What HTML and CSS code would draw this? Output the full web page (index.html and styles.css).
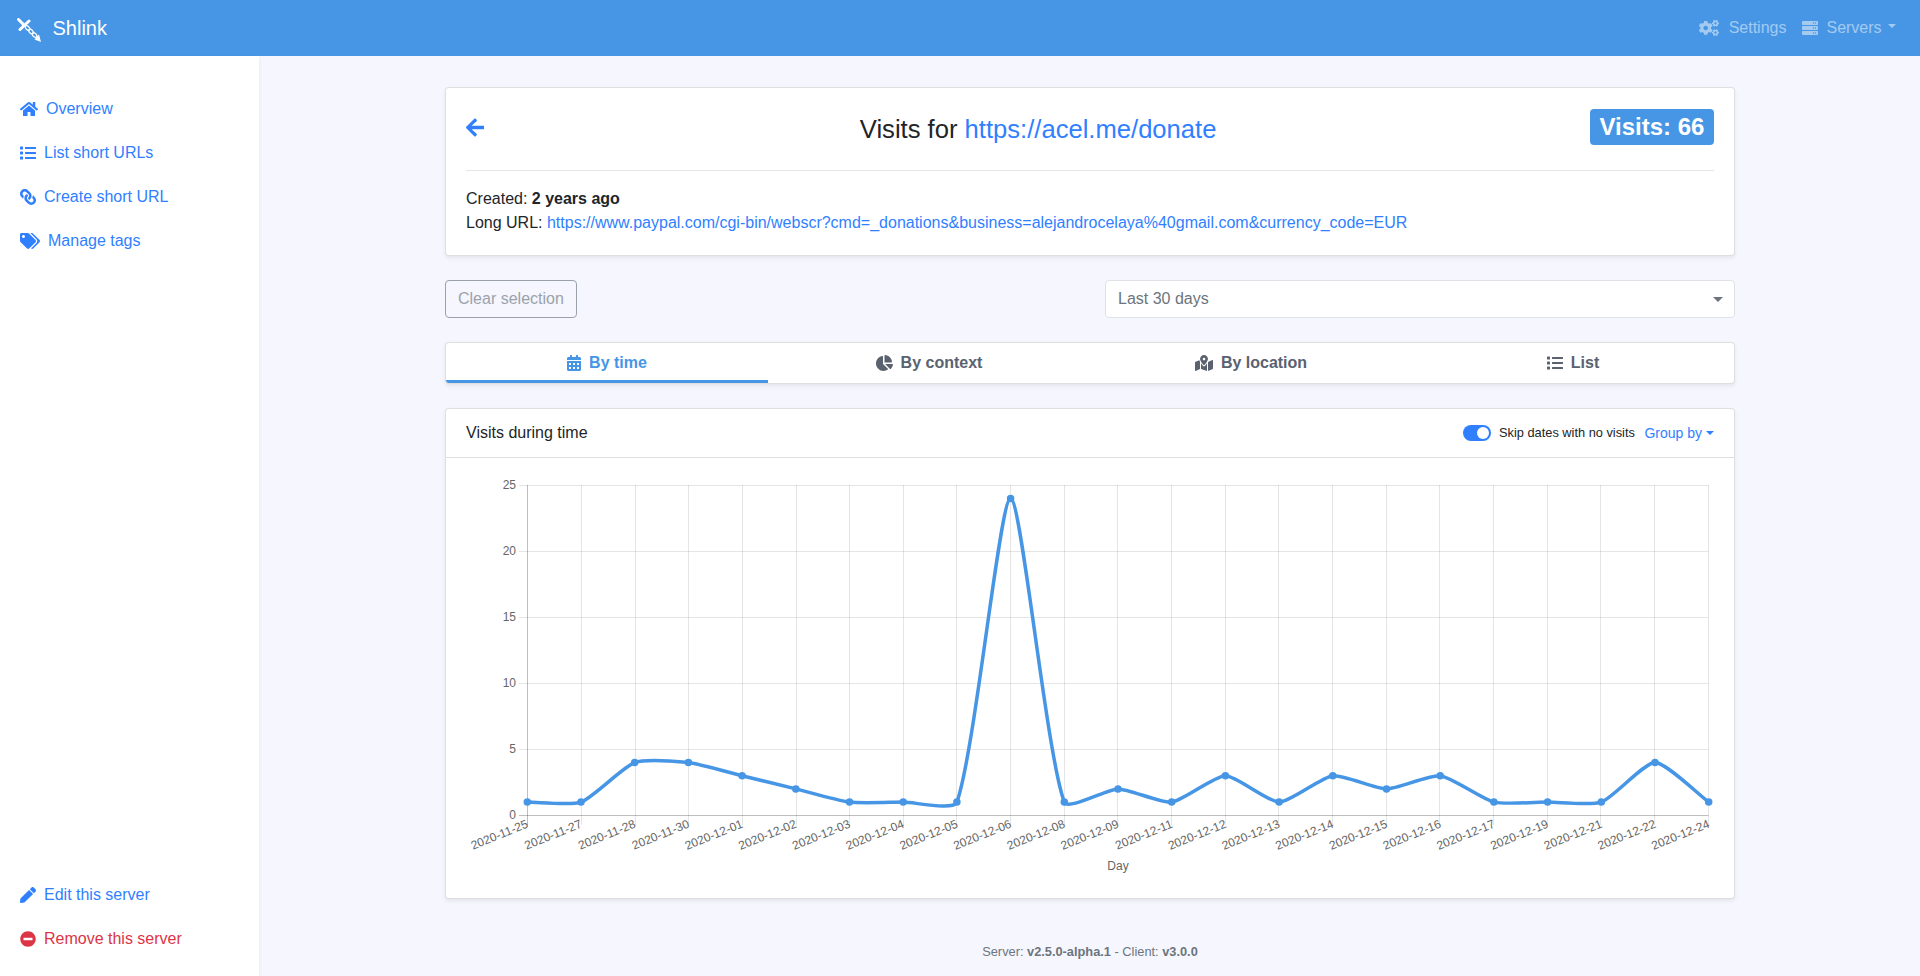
FILE: index.html
```html
<!DOCTYPE html>
<html lang="en">
<head>
<meta charset="utf-8">
<title>Shlink</title>
<link rel="stylesheet" href="styles.css">
</head>
<body>
<svg class="sprite" xmlns="http://www.w3.org/2000/svg">
  <symbol id="i-home" viewBox="0 0 576 512"><path d="M280.37 148.26L96 300.11V464a16 16 0 0 0 16 16l112.06-.29a16 16 0 0 0 15.92-16V368a16 16 0 0 1 16-16h64a16 16 0 0 1 16 16v95.64a16 16 0 0 0 16 16.05L464 480a16 16 0 0 0 16-16V300L295.67 148.26a12.19 12.19 0 0 0-15.3 0zM571.6 251.47L488 182.56V44.05a12 12 0 0 0-12-12h-56a12 12 0 0 0-12 12v72.61L318.47 43a48 48 0 0 0-61 0L4.34 251.47a12 12 0 0 0-1.6 16.9l25.5 31A12 12 0 0 0 45.15 301l235.22-193.74a12.19 12.19 0 0 1 15.3 0L530.9 301a12 12 0 0 0 16.9-1.6l25.5-31a12 12 0 0 0-1.7-16.93z"/></symbol>
  <symbol id="i-list" viewBox="0 0 512 512"><path d="M80 368H16a16 16 0 0 0-16 16v64a16 16 0 0 0 16 16h64a16 16 0 0 0 16-16v-64a16 16 0 0 0-16-16zm0-320H16A16 16 0 0 0 0 64v64a16 16 0 0 0 16 16h64a16 16 0 0 0 16-16V64a16 16 0 0 0-16-16zm0 160H16a16 16 0 0 0-16 16v64a16 16 0 0 0 16 16h64a16 16 0 0 0 16-16v-64a16 16 0 0 0-16-16zm416 176H176a16 16 0 0 0-16 16v32a16 16 0 0 0 16 16h320a16 16 0 0 0 16-16v-32a16 16 0 0 0-16-16zm0-320H176a16 16 0 0 0-16 16v32a16 16 0 0 0 16 16h320a16 16 0 0 0 16-16V80a16 16 0 0 0-16-16zm0 160H176a16 16 0 0 0-16 16v32a16 16 0 0 0 16 16h320a16 16 0 0 0 16-16v-32a16 16 0 0 0-16-16z"/></symbol>
  <symbol id="i-link" viewBox="0 0 512 512"><path d="M326.612 185.391c59.747 59.809 58.927 155.698.36 214.59-.11.12-.24.25-.36.37l-67.2 67.2c-59.27 59.27-155.699 59.262-214.96 0-59.27-59.26-59.27-155.7 0-214.96l37.106-37.106c9.84-9.84 26.786-3.3 27.294 10.606.648 17.722 3.826 35.527 9.69 52.721 1.986 5.822.567 12.262-3.783 16.612l-13.087 13.087c-28.026 28.026-28.905 73.66-1.155 101.96 28.024 28.579 74.086 28.749 102.325.51l67.2-67.19c28.191-28.191 28.073-73.757 0-101.83-3.701-3.694-7.429-6.564-10.341-8.569a16.037 16.037 0 0 1-6.947-12.606c-.396-10.567 3.348-21.456 11.698-29.806l21.054-21.055c5.521-5.521 14.182-6.199 20.584-1.731a152.482 152.482 0 0 1 20.522 17.197zM467.547 44.449c-59.261-59.262-155.69-59.27-214.96 0l-67.2 67.2c-.12.12-.25.25-.36.37-58.566 58.892-59.387 154.781.36 214.59a152.454 152.454 0 0 0 20.521 17.196c6.402 4.468 15.064 3.789 20.584-1.731l21.054-21.055c8.35-8.35 12.094-19.239 11.698-29.806a16.037 16.037 0 0 0-6.947-12.606c-2.912-2.005-6.64-4.875-10.341-8.569-28.073-28.073-28.191-73.639 0-101.83l67.2-67.19c28.239-28.239 74.3-28.069 102.325.51 27.75 28.3 26.872 73.934-1.155 101.96l-13.087 13.087c-4.35 4.35-5.769 10.79-3.783 16.612 5.864 17.194 9.042 34.999 9.69 52.721.509 13.906 17.454 20.446 27.294 10.606l37.106-37.106c59.271-59.259 59.271-155.699.001-214.959z"/></symbol>
  <symbol id="i-tags" viewBox="0 0 640 512"><path d="M497.941 225.941L286.059 14.059A48 48 0 0 0 252.118 0H48C21.49 0 0 21.49 0 48v204.118a48 48 0 0 0 14.059 33.941l211.882 211.882c18.744 18.745 49.136 18.746 67.882 0l204.118-204.118c18.745-18.745 18.745-49.137 0-67.882zM112 160c-26.51 0-48-21.49-48-48s21.49-48 48-48 48 21.49 48 48-21.49 48-48 48zm513.941 133.823L421.823 497.941c-18.745 18.745-49.137 18.745-67.882 0l-.36-.36L527.64 323.522c16.999-16.999 26.36-39.6 26.36-63.64s-9.362-46.641-26.36-63.64L331.397 0h48.721a48 48 0 0 1 33.941 14.059l211.882 211.882c18.745 18.745 18.745 49.137 0 67.882z"/></symbol>
  <symbol id="i-pen" viewBox="0 0 512 512"><path d="M290.74 93.24l128.02 128.02-277.99 277.99-114.14 12.6C11.35 513.54-1.56 500.62.14 485.34l12.7-114.22 277.9-277.88zm207.2-19.06l-60.11-60.11c-18.75-18.75-49.16-18.75-67.91 0l-56.55 56.55 128.02 128.02 56.55-56.55c18.75-18.76 18.75-49.16 0-67.91z"/></symbol>
  <symbol id="i-minus" viewBox="0 0 512 512"><path d="M256 8C119 8 8 119 8 256s111 248 248 248 248-111 248-248S393 8 256 8zM124 296c-6.6 0-12-5.4-12-12v-56c0-6.6 5.4-12 12-12h264c6.6 0 12 5.4 12 12v56c0 6.6-5.4 12-12 12H124z"/></symbol>
  <symbol id="i-cogs" viewBox="0 0 640 512"><path d="M512.1 191l-8.2 14.3c-3 5.3-9.4 7.5-15.1 5.4-11.8-4.4-22.6-10.7-32.1-18.6-4.6-3.8-5.8-10.5-2.8-15.7l8.2-14.3c-6.9-8-12.3-17.3-15.9-27.4h-16.5c-6 0-11.2-4.3-12.2-10.3-2-12-2.1-24.6 0-37.1 1-6 6.2-10.4 12.2-10.4h16.5c3.6-10.1 9-19.4 15.9-27.4l-8.2-14.3c-3-5.2-1.9-11.9 2.8-15.7 9.5-7.9 20.4-14.2 32.1-18.6 5.7-2.1 12.1.1 15.1 5.4l8.2 14.3c10.5-1.9 21.2-1.9 31.7 0L552 6.3c3-5.3 9.4-7.5 15.1-5.4 11.8 4.4 22.6 10.7 32.1 18.6 4.6 3.8 5.8 10.5 2.8 15.7l-8.2 14.3c6.9 8 12.3 17.3 15.9 27.4h16.5c6 0 11.2 4.3 12.2 10.3 2 12 2.1 24.6 0 37.1-1 6-6.2 10.4-12.2 10.4h-16.5c-3.6 10.1-9 19.4-15.9 27.4l8.2 14.3c3 5.2 1.9 11.9-2.8 15.7-9.5 7.9-20.4 14.2-32.1 18.6-5.7 2.1-12.1-.1-15.1-5.4l-8.2-14.3c-10.4 1.9-21.2 1.9-31.7 0zm-10.5-58.8c38.5 29.6 82.4-14.3 52.8-52.8-38.5-29.7-82.4 14.3-52.8 52.8zM386.3 286.1l33.7 16.8c10.1 5.8 14.5 18.1 10.5 29.1-8.9 24.2-26.4 46.4-42.6 65.8-7.4 8.9-20.2 11.1-30.3 5.3l-29.1-16.8c-16 13.7-34.6 24.6-54.9 31.7v33.6c0 11.6-8.3 21.6-19.7 23.6-24.6 4.2-50.4 4.4-75.9 0-11.5-2-20-11.9-20-23.6V418c-20.3-7.2-38.9-18-54.9-31.7L74 403c-10 5.8-22.9 3.6-30.3-5.3-16.2-19.4-33.3-41.6-42.2-65.7-4-10.9.4-23.2 10.5-29.1l33.3-16.8c-3.9-20.9-3.9-42.4 0-63.4L12 205.8c-10.1-5.8-14.6-18.1-10.5-29 8.9-24.2 26-46.4 42.2-65.8 7.4-8.9 20.2-11.1 30.3-5.3l29.1 16.8c16-13.7 34.6-24.6 54.9-31.7V57.1c0-11.5 8.2-21.5 19.6-23.5 24.6-4.2 50.5-4.4 76-.1 11.5 2 20 11.9 20 23.6v33.6c20.3 7.2 38.9 18 54.9 31.7l29.1-16.8c10-5.8 22.9-3.6 30.3 5.3 16.2 19.4 33.2 41.6 42.1 65.8 4 10.9.1 23.2-10 29.1l-33.7 16.8c3.9 21 3.9 42.5 0 63.5zm-117.6 21.1c59.2-77-28.7-164.9-105.7-105.7-59.2 77 28.7 164.9 105.7 105.7zm243.4 182.7l-8.2 14.3c-3 5.3-9.4 7.5-15.1 5.4-11.8-4.4-22.6-10.7-32.1-18.6-4.6-3.8-5.8-10.5-2.8-15.7l8.2-14.3c-6.9-8-12.3-17.3-15.9-27.4h-16.5c-6 0-11.2-4.3-12.2-10.3-2-12-2.1-24.6 0-37.1 1-6 6.2-10.4 12.2-10.4h16.5c3.6-10.1 9-19.4 15.9-27.4l-8.2-14.3c-3-5.2-1.9-11.9 2.8-15.7 9.5-7.9 20.4-14.2 32.1-18.6 5.7-2.1 12.1.1 15.1 5.4l8.2 14.3c10.5-1.9 21.2-1.9 31.7 0l8.2-14.3c3-5.3 9.4-7.5 15.1-5.4 11.8 4.4 22.6 10.7 32.1 18.6 4.6 3.8 5.8 10.5 2.8 15.7l-8.2 14.3c6.9 8 12.3 17.3 15.9 27.4h16.5c6 0 11.2 4.3 12.2 10.3 2 12 2.1 24.6 0 37.1-1 6-6.2 10.4-12.2 10.4h-16.5c-3.6 10.1-9 19.4-15.9 27.4l8.2 14.3c3 5.2 1.9 11.9-2.8 15.7-9.5 7.9-20.4 14.2-32.1 18.6-5.7 2.1-12.1-.1-15.1-5.4l-8.2-14.3c-10.4 1.9-21.2 1.9-31.7 0zM501.6 431c38.5 29.6 82.4-14.3 52.8-52.8-38.5-29.6-82.4 14.3-52.8 52.8z"/></symbol>
  <symbol id="i-server" viewBox="0 0 512 512"><path d="M480 160H32c-17.673 0-32-14.327-32-32V64c0-17.673 14.327-32 32-32h448c17.673 0 32 14.327 32 32v64c0 17.673-14.327 32-32 32zm-48-88c-13.255 0-24 10.745-24 24s10.745 24 24 24 24-10.745 24-24-10.745-24-24-24zm-64 0c-13.255 0-24 10.745-24 24s10.745 24 24 24 24-10.745 24-24-10.745-24-24-24zm112 248H32c-17.673 0-32-14.327-32-32v-64c0-17.673 14.327-32 32-32h448c17.673 0 32 14.327 32 32v64c0 17.673-14.327 32-32 32zm-48-88c-13.255 0-24 10.745-24 24s10.745 24 24 24 24-10.745 24-24-10.745-24-24-24zm-64 0c-13.255 0-24 10.745-24 24s10.745 24 24 24 24-10.745 24-24-10.745-24-24-24zm112 248H32c-17.673 0-32-14.327-32-32v-64c0-17.673 14.327-32 32-32h448c17.673 0 32 14.327 32 32v64c0 17.673-14.327 32-32 32zm-48-88c-13.255 0-24 10.745-24 24s10.745 24 24 24 24-10.745 24-24-10.745-24-24-24zm-64 0c-13.255 0-24 10.745-24 24s10.745 24 24 24 24-10.745 24-24-10.745-24-24-24z"/></symbol>
  <symbol id="i-arrow" viewBox="0 0 448 512"><path d="M257.5 445.1l-22.2 22.2c-9.4 9.4-24.6 9.4-33.9 0L7 273c-9.4-9.4-9.4-24.6 0-33.9L201.4 44.7c9.4-9.4 24.6-9.4 33.9 0l22.2 22.2c9.5 9.5 9.3 25-.4 34.3L136.6 216H424c13.3 0 24 10.7 24 24v32c0 13.3-10.7 24-24 24H136.6l120.5 114.8c9.8 9.3 10 24.8.4 34.3z"/></symbol>
  <symbol id="i-calendar" viewBox="0 0 448 512"><path d="M0 464c0 26.5 21.5 48 48 48h352c26.5 0 48-21.5 48-48V192H0v272zm320-196c0-6.6 5.4-12 12-12h40c6.6 0 12 5.4 12 12v40c0 6.6-5.4 12-12 12h-40c-6.6 0-12-5.4-12-12v-40zm0 128c0-6.6 5.4-12 12-12h40c6.6 0 12 5.4 12 12v40c0 6.6-5.4 12-12 12h-40c-6.6 0-12-5.4-12-12v-40zM192 268c0-6.6 5.4-12 12-12h40c6.6 0 12 5.4 12 12v40c0 6.6-5.4 12-12 12h-40c-6.6 0-12-5.4-12-12v-40zm0 128c0-6.6 5.4-12 12-12h40c6.6 0 12 5.4 12 12v40c0 6.6-5.4 12-12 12h-40c-6.6 0-12-5.4-12-12v-40zM64 268c0-6.6 5.4-12 12-12h40c6.6 0 12 5.4 12 12v40c0 6.6-5.4 12-12 12H76c-6.6 0-12-5.4-12-12v-40zm0 128c0-6.6 5.4-12 12-12h40c6.6 0 12 5.4 12 12v40c0 6.6-5.4 12-12 12H76c-6.6 0-12-5.4-12-12v-40zM400 64h-48V16c0-8.8-7.2-16-16-16h-32c-8.8 0-16 7.2-16 16v48H160V16c0-8.8-7.2-16-16-16h-32c-8.8 0-16 7.2-16 16v48H48C21.5 64 0 85.5 0 112v48h448v-48c0-26.5-21.5-48-48-48z"/></symbol>
  <symbol id="i-pie" viewBox="0 0 544 512"><path d="M527.79 288H290.5l158.03 158.03c6.04 6.04 15.98 6.53 22.19.68 38.7-36.46 65.32-85.61 73.13-140.86 1.34-9.46-6.51-17.85-16.06-17.85zm-15.83-64.8C503.72 103.74 408.26 8.28 288.8.04 279.68-.59 272 7.1 272 16.24V240h223.77c9.14 0 16.82-7.68 16.19-16.8zM224 288V50.71c0-9.55-8.39-17.4-17.84-16.06C86.99 51.49-4.1 155.6.14 280.37 4.5 408.51 114.83 513.59 243.03 511.98c50.4-.63 96.97-16.87 135.26-44.03 7.9-5.6 8.42-17.23 1.57-24.08L224 288z"/></symbol>
  <symbol id="i-map" viewBox="0 0 576 512"><path d="M288 0c-69.59 0-126 56.41-126 126 0 56.26 82.35 158.8 113.9 196.02 6.39 7.54 17.82 7.54 24.2 0C331.65 284.8 414 182.26 414 126 414 56.41 357.59 0 288 0zm0 168c-23.2 0-42-18.8-42-42s18.8-42 42-42 42 18.8 42 42-18.8 42-42 42zM20.12 215.95A32.006 32.006 0 0 0 0 245.66v250.32c0 11.32 11.43 19.06 21.94 14.86L160 448V214.92c-8.84-15.98-16.07-31.54-21.25-46.42L20.12 215.95zM288 359.67c-14.07 0-27.38-6.18-36.51-16.96-19.66-23.2-40.57-49.62-59.49-76.72V448l192 64V266c-18.92 27.09-39.82 53.52-59.49 76.72-9.13 10.77-22.44 16.95-36.51 16.95zm266.06-198.51L416 224v288l139.88-55.95A31.996 31.996 0 0 0 576 426.34V176.02c0-11.32-11.43-19.06-21.94-14.86z"/></symbol>
</svg>

<header class="topbar">
  <a class="brand" href="#">
    <svg class="logo" viewBox="0 0 24 24">
      <g class="logo-strokes">
        <path class="logo-thick" d="M1.5 1.5L7 7M3 11.5L12 3"/>
        <g class="logo-chain">
          <ellipse cx="10.5" cy="10" rx="2.8" ry="1.7" transform="rotate(45 10.5 10)"/>
          <ellipse cx="14" cy="13.5" rx="2.8" ry="1.7" transform="rotate(45 14 13.5)"/>
          <ellipse cx="17.5" cy="17" rx="2.8" ry="1.7" transform="rotate(45 17.5 17)"/>
        </g>
      </g>
      <path class="logo-tip" d="M17.5 21.5L24 24L22 16.5Z"/>
    </svg>
    <span>Shlink</span>
  </a>
  <nav class="topnav">
    <a href="#" class="topnav-link gear"><svg class="ico w20"><use href="#i-cogs"/></svg>Settings</a>
    <a href="#" class="topnav-link"><svg class="ico"><use href="#i-server"/></svg>Servers<span class="caret"></span></a>
  </nav>
</header>

<div class="layout">
  <aside class="sidebar">
    <ul class="side-list">
      <li><a href="#"><svg class="ico w18"><use href="#i-home"/></svg>Overview</a></li>
      <li><a href="#"><svg class="ico"><use href="#i-list"/></svg>List short URLs</a></li>
      <li><a href="#"><svg class="ico flip"><use href="#i-link"/></svg>Create short URL</a></li>
      <li><a href="#"><svg class="ico w20"><use href="#i-tags"/></svg>Manage tags</a></li>
    </ul>
    <ul class="side-list side-bottom">
      <li><a href="#"><svg class="ico"><use href="#i-pen"/></svg>Edit this server</a></li>
      <li><a href="#" class="danger"><svg class="ico"><use href="#i-minus"/></svg>Remove this server</a></li>
    </ul>
  </aside>

  <main class="main">
    <div class="container">
      <section class="card head-card">
        <div class="title-row">
          <a href="#" class="back"><svg class="ico arrow"><use href="#i-arrow"/></svg></a>
          <h2 class="title">Visits for <a href="#">https://acel.me/donate</a></h2>
          <span class="badge">Visits: 66</span>
        </div>
        <hr class="divider">
        <p class="meta">Created: <b>2 years ago</b></p>
        <p class="meta">Long URL: <a href="#">https://www.paypal.com/cgi-bin/webscr?cmd=_donations&amp;business=alejandrocelaya%40gmail.com&amp;currency_code=EUR</a></p>
      </section>

      <div class="controls">
        <button class="btn-clear" disabled>Clear selection</button>
        <div class="select">Last 30 days<span class="caret"></span></div>
      </div>

      <nav class="card tabs">
        <a href="#" class="tab active"><svg class="ico w14"><use href="#i-calendar"/></svg>By time</a>
        <a href="#" class="tab"><svg class="ico w17"><use href="#i-pie"/></svg>By context</a>
        <a href="#" class="tab"><svg class="ico w18"><use href="#i-map"/></svg>By location</a>
        <a href="#" class="tab"><svg class="ico"><use href="#i-list"/></svg>List</a>
      </nav>

      <section class="card chart-card">
        <div class="chart-head">
          <span>Visits during time</span>
          <div class="chart-tools">
            <span class="switch"><span class="knob"></span></span>
            <span class="skip">Skip dates with no visits</span>
            <a href="#" class="group">Group by<span class="caret"></span></a>
          </div>
        </div>
        <svg class="chart" viewBox="446 458 1286 439">
          <g class="grid">
            <path d="M519 485.5H1708.5M519 551.5H1708.5M519 617.5H1708.5M519 683.5H1708.5M519 749.5H1708.5"/>
            <path d="M581.5 485V825M635.5 485V825M688.5 485V825M742.5 485V825M796.5 485V825M849.5 485V825M903.5 485V825M956.5 485V825M1010.5 485V825M1064.5 485V825M1117.5 485V825M1171.5 485V825M1225.5 485V825M1278.5 485V825M1332.5 485V825M1386.5 485V825M1439.5 485V825M1493.5 485V825M1547.5 485V825M1600.5 485V825M1654.5 485V825M1708.5 485V825"/>
          </g>
          <path class="axis" d="M527.5 485V825M519 815.5H1708.5"/>
          <g class="ylabels">
            <text x="516" y="489">25</text><text x="516" y="555">20</text><text x="516" y="621">15</text><text x="516" y="687">10</text><text x="516" y="753">5</text><text x="516" y="819">0</text>
          </g>
          <g class="xlabels" transform="translate(2 2)">
            <text transform="translate(527 825) rotate(-22)">2020-11-25</text>
            <text transform="translate(580.7 825) rotate(-22)">2020-11-27</text>
            <text transform="translate(634.4 825) rotate(-22)">2020-11-28</text>
            <text transform="translate(688.1 825) rotate(-22)">2020-11-30</text>
            <text transform="translate(741.8 825) rotate(-22)">2020-12-01</text>
            <text transform="translate(795.5 825) rotate(-22)">2020-12-02</text>
            <text transform="translate(849.2 825) rotate(-22)">2020-12-03</text>
            <text transform="translate(902.9 825) rotate(-22)">2020-12-04</text>
            <text transform="translate(956.6 825) rotate(-22)">2020-12-05</text>
            <text transform="translate(1010.3 825) rotate(-22)">2020-12-06</text>
            <text transform="translate(1064 825) rotate(-22)">2020-12-08</text>
            <text transform="translate(1117.7 825) rotate(-22)">2020-12-09</text>
            <text transform="translate(1171.4 825) rotate(-22)">2020-12-11</text>
            <text transform="translate(1225.1 825) rotate(-22)">2020-12-12</text>
            <text transform="translate(1278.8 825) rotate(-22)">2020-12-13</text>
            <text transform="translate(1332.5 825) rotate(-22)">2020-12-14</text>
            <text transform="translate(1386.2 825) rotate(-22)">2020-12-15</text>
            <text transform="translate(1439.9 825) rotate(-22)">2020-12-16</text>
            <text transform="translate(1493.6 825) rotate(-22)">2020-12-17</text>
            <text transform="translate(1547.3 825) rotate(-22)">2020-12-19</text>
            <text transform="translate(1601 825) rotate(-22)">2020-12-21</text>
            <text transform="translate(1654.7 825) rotate(-22)">2020-12-22</text>
            <text transform="translate(1708.4 825) rotate(-22)">2020-12-24</text>
          </g>
          <text class="xtitle" x="1118" y="870">Day</text>
          <g transform="translate(0.3 0)">
            <path class="line" d="M527 802.1C537.74 802.1 571.12 805.63 580.7 802.1C592.6 797.71 622.5 766.89 634.4 762.5C643.98 758.97 677.52 761.2 688.1 762.5C699 763.84 731.06 773.06 741.8 775.7C752.54 778.34 784.76 786.26 795.5 788.9C806.24 791.54 838.3 800.76 849.2 802.1C859.79 803.4 892.16 802.1 902.9 802.1C913.64 802.1 953.42 811.1 956.6 802.1C974.9 750.38 999.56 498.5 1010.3 498.5C1021.04 498.5 1045.8 752.85 1064 802.1C1067.27 810.93 1106.96 788.9 1117.7 788.9C1128.44 788.9 1161.08 803.37 1171.4 802.1C1182.57 800.73 1214.36 775.7 1225.1 775.7C1235.84 775.7 1268.06 802.1 1278.8 802.1C1289.54 802.1 1321.33 777.07 1332.5 775.7C1342.82 774.43 1375.46 788.9 1386.2 788.9C1396.94 788.9 1429.58 774.43 1439.9 775.7C1451.07 777.07 1482.28 799.31 1493.6 802.1C1503.76 804.6 1536.56 802.1 1547.3 802.1C1558.04 802.1 1591.42 805.63 1601 802.1C1612.9 797.71 1643.96 762.5 1654.7 762.5C1665.44 762.5 1697.66 794.18 1708.4 802.1"/>
            <g class="dots">
              <circle cx="527" cy="802.1" r="3.75"/><circle cx="580.7" cy="802.1" r="3.75"/><circle cx="634.4" cy="762.5" r="3.75"/><circle cx="688.1" cy="762.5" r="3.75"/><circle cx="741.8" cy="775.7" r="3.75"/><circle cx="795.5" cy="788.9" r="3.75"/><circle cx="849.2" cy="802.1" r="3.75"/><circle cx="902.9" cy="802.1" r="3.75"/><circle cx="956.6" cy="802.1" r="3.75"/><circle cx="1010.3" cy="498.5" r="3.75"/><circle cx="1064" cy="802.1" r="3.75"/><circle cx="1117.7" cy="788.9" r="3.75"/><circle cx="1171.4" cy="802.1" r="3.75"/><circle cx="1225.1" cy="775.7" r="3.75"/><circle cx="1278.8" cy="802.1" r="3.75"/><circle cx="1332.5" cy="775.7" r="3.75"/><circle cx="1386.2" cy="788.9" r="3.75"/><circle cx="1439.9" cy="775.7" r="3.75"/><circle cx="1493.6" cy="802.1" r="3.75"/><circle cx="1547.3" cy="802.1" r="3.75"/><circle cx="1601" cy="802.1" r="3.75"/><circle cx="1654.7" cy="762.5" r="3.75"/><circle cx="1708.4" cy="802.1" r="3.75"/>
            </g>
          </g>
        </svg>
      </section>

      <footer class="foot">Server: <b>v2.5.0-alpha.1</b> - Client: <b>v3.0.0</b></footer>
    </div>
  </main>
</div>
</body>
</html>
```

FILE: styles.css
```css
* { box-sizing: border-box; }
html, body { margin: 0; height: 100%; }
body {
  font-family: "Liberation Sans", Arial, sans-serif;
  font-size: 16px;
  line-height: 24px;
  color: #212529;
  background: #f5f6fe;
  overflow: hidden;
  display: flex;
  flex-direction: column;
}
a { color: #2f7fff; text-decoration: none; }
.sprite { display: none; }
.ico { width: 16px; height: 16px; fill: currentColor; flex: none; display: block; }
.ico.w14 { width: 14px; }
.ico.w17 { width: 17px; }
.ico.w18 { width: 18px; }
.ico.w20 { width: 20px; }
.flip { transform: scaleX(-1); }

.topbar {
  height: 56px;
  flex: none;
  background: #4696e5;
  display: flex;
  align-items: center;
  justify-content: space-between;
  padding: 0 24px 0 17px;
}
.brand { display: flex; align-items: center; color: #fff; font-size: 20px; }
.logo { width: 24px; height: 24px; margin-right: 11.5px; margin-top: 4px; }
.logo-strokes { fill: none; stroke: #fff; stroke-linecap: round; }
.logo-thick { stroke-width: 3; }
.logo-chain ellipse { stroke-width: 1.2; }
.logo-tip { fill: #fff; }
.topnav { display: flex; gap: 16px; }
.topnav-link { display: flex; align-items: center; gap: 8px; color: rgba(255,255,255,.5); }
.topnav-link.gear { gap: 9.5px; }
.caret {
  display: inline-block;
  margin-left: 4px;
  border-top: 4.8px solid currentColor;
  border-left: 4.8px solid transparent;
  border-right: 4.8px solid transparent;
}
.topnav .caret { margin: 0 0 4px -1.6px; }

.layout { flex: 1; display: flex; min-height: 0; }
.sidebar {
  width: 259px;
  flex: none;
  background: #fff;
  box-shadow: 0 2px 4px rgba(0,0,0,.075);
  padding: 31px 0 15px;
  display: flex;
  flex-direction: column;
  justify-content: space-between;
}
.side-list { list-style: none; margin: 0; padding: 0; }
.side-list li a { display: flex; align-items: center; gap: 8px; height: 44px; padding-left: 20px; }
.side-list li a.danger { color: #dc3545; }

.main { flex: 1; min-width: 0; padding-left: 1px; }
.container { width: 1320px; margin: 0 auto; padding: 31px 15px 0; }
.card {
  background: #fff;
  border: 1px solid rgba(0,0,0,.125);
  border-radius: 4px;
  box-shadow: 0 2px 4px rgba(0,0,0,.075);
}
.head-card { padding: 20px; }
.title-row { display: flex; align-items: center; justify-content: space-between; height: 38px; }
.ico.arrow { width: 18.4px; height: 21px; }
.title { margin: 4px 0 0 2px; font-size: 25.6px; font-weight: 400; line-height: 30px; color: #212529; }
.badge {
  background: #4696e5;
  color: #fff;
  font-size: 24px;
  line-height: 24px;
  font-weight: 700;
  padding: 6px 9.6px;
  border-radius: 4px;
}
.divider { border: 0; border-top: 1px solid rgba(0,0,0,.1); margin: 24px 0 16px; }
.meta { margin: 0; }

.controls { display: flex; justify-content: space-between; margin-top: 24px; }
.btn-clear {
  font: inherit;
  height: 38px;
  padding: 0 12px;
  color: #6c757d;
  background: transparent;
  border: 1px solid #6c757d;
  border-radius: 4px;
  opacity: .65;
}
.select {
  width: 630px;
  height: 38px;
  padding: 0 12px;
  background: #fff;
  border: 1px solid #dee2e6;
  border-radius: 4px;
  color: #6c757d;
  display: flex;
  align-items: center;
  justify-content: space-between;
}
.select .caret {
  color: #6c757d;
  margin-right: -1px;
  border-top-width: 5px;
  border-left-width: 5.5px;
  border-right-width: 5.5px;
}

.tabs { display: grid; grid-template-columns: repeat(4, 1fr); height: 42px; margin-top: 24px; overflow: hidden; }
.tab {
  display: flex;
  align-items: center;
  justify-content: center;
  gap: 8px;
  font-weight: 700;
  color: #5a6270;
  padding-top: 3px;
  border-bottom: 3px solid transparent;
}
.tab.active { color: #4696e5; border-bottom-color: #4696e5; }

.chart-card { margin-top: 24px; height: 491px; }
.chart-head {
  height: 49px;
  border-bottom: 1px solid rgba(0,0,0,.125);
  padding: 0 20px;
  display: flex;
  align-items: center;
  justify-content: space-between;
}
.chart-tools { display: flex; align-items: center; }
.switch { width: 28px; height: 16px; border-radius: 8px; background: #2f7fff; position: relative; margin-right: 8px; }
.knob { position: absolute; top: 2px; right: 2px; width: 12px; height: 12px; border-radius: 50%; background: #fff; }
.skip { font-size: 12.8px; margin-right: 9.5px; }
.group { font-size: 14px; display: flex; align-items: center; }
.group .caret { border-top-width: 4px; border-left-width: 4px; border-right-width: 4px; }

.chart { display: block; width: 1286px; height: 439px; }
.grid path { stroke: rgba(0,0,0,.1); fill: none; }
.axis { stroke: rgba(0,0,0,.25); fill: none; }
.ylabels text { font-size: 12px; fill: #666; text-anchor: end; }
.xlabels text { font-size: 12px; fill: #666; text-anchor: end; }
.xtitle { font-size: 12px; fill: #666; text-anchor: middle; }
.line { fill: none; stroke: #4696e5; stroke-width: 3.5; }
.dots circle { fill: #4696e5; }

.foot { margin-top: 43px; text-align: center; font-size: 12.8px; color: #6c757d; line-height: 20px; }
```
